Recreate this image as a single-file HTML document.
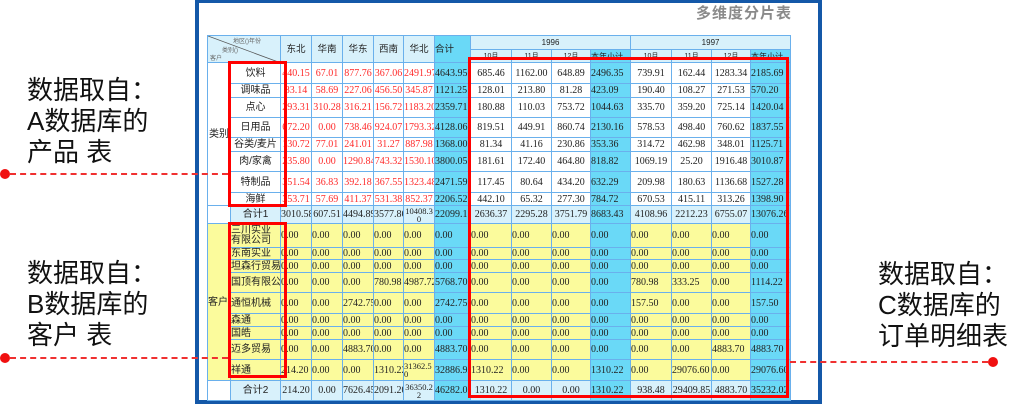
<!DOCTYPE html>
<html><head><meta charset="utf-8">
<style>
*{margin:0;padding:0;box-sizing:border-box}
body{width:1024px;height:404px;background:#fff;position:relative;overflow:hidden;font-family:"Liberation Sans","Noto Sans CJK SC",sans-serif}
.frame{position:absolute;left:195px;top:0;width:627px;height:404px;border:4px solid #1458a8;border-top-width:3px;background:#fff}
.title{position:absolute;left:696px;top:2px;font-size:15px;font-weight:bold;color:#8a8a8a;letter-spacing:1px}
table{position:absolute;left:207px;top:35px;border-collapse:collapse;table-layout:fixed;width:583px;font-family:"Liberation Serif","Noto Serif CJK SC",serif;font-size:10px;color:#222}
td{border:1px solid #6ab0ec;padding:0;overflow:hidden;white-space:nowrap;text-align:center;line-height:9px}
.h{background:#d8f1fb;font-family:"Liberation Sans","Noto Sans CJK SC",sans-serif;font-size:9.5px}
.c{background:#6ad9f7;text-align:left}
.w{background:#fff}
.r{color:#ff2a2a}
.y{background:#fbfb9c;text-align:left}
.lb{background:#d8f1fb}
.nm{font-family:"Liberation Sans","Noto Sans CJK SC",sans-serif;font-size:10px}
.wr{white-space:normal;word-break:break-all;font-size:8.5px;line-height:8px}
.box{position:absolute;border:3px solid #f00}
.ann{position:absolute;font-size:26px;line-height:31px;color:#111;font-family:"Liberation Sans","Noto Sans CJK SC",sans-serif}
.dash{position:absolute;height:0;border-top:2px dashed #f03030}
.dot{position:absolute;width:10px;height:10px;border-radius:50%;background:#f01010}
</style></head><body>
<div class="frame"></div>
<div class="title">多维度分片表</div>
<table>
<colgroup><col style="width:23px"><col style="width:50px"><col style="width:31px"><col style="width:31px"><col style="width:31px"><col style="width:30px"><col style="width:31px"><col style="width:36px"><col style="width:41px"><col style="width:40px"><col style="width:39px"><col style="width:40px"><col style="width:41px"><col style="width:40px"><col style="width:39px"><col style="width:40px"></colgroup>
<tr style="height:14px"><td colspan="2" rowspan="2" class="h" style="position:relative;font-size:6px;text-align:left"><svg width="73" height="27" style="position:absolute;left:0;top:0"><line x1="0" y1="0" x2="73" y2="27" stroke="#555" stroke-width="0.8"/></svg><div style="position:absolute;left:25px;top:2px;color:#666">地区()年份</div><div style="position:absolute;left:14px;top:11px;color:#666">类别()</div><div style="position:absolute;left:2px;top:19px;color:#666">客户</div></td><td rowspan="2" class="h">东北</td><td rowspan="2" class="h">华南</td><td rowspan="2" class="h">华东</td><td rowspan="2" class="h">西南</td><td rowspan="2" class="h">华北</td><td rowspan="2" class="h c">合计</td><td colspan="4" class="h" style="font-size:8px">1996</td><td colspan="4" class="h" style="font-size:8px">1997</td></tr>
<tr style="height:13px"><td class="h" style="font-size:7px">10月</td><td class="h" style="font-size:7px">11月</td><td class="h" style="font-size:7px">12月</td><td class="h c" style="font-size:8px">本年小计</td><td class="h" style="font-size:7px">10月</td><td class="h" style="font-size:7px">11月</td><td class="h" style="font-size:7px">12月</td><td class="h c" style="font-size:8px">本年小计</td></tr>
<tr style="height:21px"><td rowspan="8" class="w nm">类别</td><td class="w nm">饮料</td><td class="r">440.15</td><td class="r">67.01</td><td class="r">877.76</td><td class="r">367.06</td><td class="r">2491.97</td><td class="c">4643.95</td><td>685.46</td><td>1162.00</td><td>648.89</td><td class="c">2496.35</td><td>739.91</td><td>162.44</td><td>1283.34</td><td class="c">2185.69</td></tr>
<tr style="height:14px"><td class="w nm">调味品</td><td class="r">83.14</td><td class="r">58.69</td><td class="r">227.06</td><td class="r">456.50</td><td class="r">345.87</td><td class="c">1121.25</td><td>128.01</td><td>213.80</td><td>81.28</td><td class="c">423.09</td><td>190.40</td><td>108.27</td><td>271.53</td><td class="c">570.20</td></tr>
<tr style="height:20px"><td class="w nm">点心</td><td class="r">293.31</td><td class="r">310.28</td><td class="r">316.21</td><td class="r">156.72</td><td class="r">1183.20</td><td class="c">2359.71</td><td>180.88</td><td>110.03</td><td>753.72</td><td class="c">1044.63</td><td>335.70</td><td>359.20</td><td>725.14</td><td class="c">1420.04</td></tr>
<tr style="height:20px"><td class="w nm">日用品</td><td class="r">672.20</td><td class="r">0.00</td><td class="r">738.46</td><td class="r">924.07</td><td class="r">1793.32</td><td class="c">4128.06</td><td>819.51</td><td>449.91</td><td>860.74</td><td class="c">2130.16</td><td>578.53</td><td>498.40</td><td>760.62</td><td class="c">1837.55</td></tr>
<tr style="height:14px"><td class="w nm">谷类/麦片</td><td class="r">130.72</td><td class="r">77.01</td><td class="r">241.01</td><td class="r">31.27</td><td class="r">887.98</td><td class="c">1368.00</td><td>81.34</td><td>41.16</td><td>230.86</td><td class="c">353.36</td><td>314.72</td><td>462.98</td><td>348.01</td><td class="c">1125.71</td></tr>
<tr style="height:20px"><td class="w nm">肉/家禽</td><td class="r">235.80</td><td class="r">0.00</td><td class="r">1290.84</td><td class="r">743.32</td><td class="r">1530.10</td><td class="c">3800.05</td><td>181.61</td><td>172.40</td><td>464.80</td><td class="c">818.82</td><td>1069.19</td><td>25.20</td><td>1916.48</td><td class="c">3010.87</td></tr>
<tr style="height:21px"><td class="w nm">特制品</td><td class="r">351.54</td><td class="r">36.83</td><td class="r">392.18</td><td class="r">367.55</td><td class="r">1323.48</td><td class="c">2471.59</td><td>117.45</td><td>80.64</td><td>434.20</td><td class="c">632.29</td><td>209.98</td><td>180.63</td><td>1136.68</td><td class="c">1527.28</td></tr>
<tr style="height:13px"><td class="w nm">海鲜</td><td class="r">353.71</td><td class="r">57.69</td><td class="r">411.37</td><td class="r">531.38</td><td class="r">852.37</td><td class="c">2206.52</td><td>442.10</td><td>65.32</td><td>277.30</td><td class="c">784.72</td><td>670.53</td><td>415.11</td><td>313.26</td><td class="c">1398.90</td></tr>
<tr style="height:18px" class="lb"><td class="w"></td><td class="lb nm">合计1</td><td>3010.58</td><td>607.51</td><td>4494.89</td><td>3577.86</td><td class="wr">10408.30</td><td class="c">22099.13</td><td>2636.37</td><td>2295.28</td><td>3751.79</td><td class="c">8683.43</td><td>4108.96</td><td>2212.23</td><td>6755.07</td><td class="c">13076.26</td></tr>
<tr style="height:24px"><td rowspan="9" class="y nm">客户</td><td class="y nm" style="white-space:normal;word-break:break-all;line-height:10px">三川实业有限公司</td><td class="y">0.00</td><td class="y">0.00</td><td class="y">0.00</td><td class="y">0.00</td><td class="y">0.00</td><td class="c">0.00</td><td class="y">0.00</td><td class="y">0.00</td><td class="y">0.00</td><td class="c">0.00</td><td class="y">0.00</td><td class="y">0.00</td><td class="y">0.00</td><td class="c">0.00</td></tr>
<tr style="height:12px"><td class="y nm">东南实业</td><td class="y">0.00</td><td class="y">0.00</td><td class="y">0.00</td><td class="y">0.00</td><td class="y">0.00</td><td class="c">0.00</td><td class="y">0.00</td><td class="y">0.00</td><td class="y">0.00</td><td class="c">0.00</td><td class="y">0.00</td><td class="y">0.00</td><td class="y">0.00</td><td class="c">0.00</td></tr>
<tr style="height:13px"><td class="y nm">坦森行贸易</td><td class="y">0.00</td><td class="y">0.00</td><td class="y">0.00</td><td class="y">0.00</td><td class="y">0.00</td><td class="c">0.00</td><td class="y">0.00</td><td class="y">0.00</td><td class="y">0.00</td><td class="c">0.00</td><td class="y">0.00</td><td class="y">0.00</td><td class="y">0.00</td><td class="c">0.00</td></tr>
<tr style="height:20px"><td class="y nm">国顶有限公司</td><td class="y">0.00</td><td class="y">0.00</td><td class="y">0.00</td><td class="y">780.98</td><td class="y">4987.72</td><td class="c">5768.70</td><td class="y">0.00</td><td class="y">0.00</td><td class="y">0.00</td><td class="c">0.00</td><td class="y">780.98</td><td class="y">333.25</td><td class="y">0.00</td><td class="c">1114.22</td></tr>
<tr style="height:21px"><td class="y nm">通恒机械</td><td class="y">0.00</td><td class="y">0.00</td><td class="y">2742.75</td><td class="y">0.00</td><td class="y">0.00</td><td class="c">2742.75</td><td class="y">0.00</td><td class="y">0.00</td><td class="y">0.00</td><td class="c">0.00</td><td class="y">157.50</td><td class="y">0.00</td><td class="y">0.00</td><td class="c">157.50</td></tr>
<tr style="height:13px"><td class="y nm">森通</td><td class="y">0.00</td><td class="y">0.00</td><td class="y">0.00</td><td class="y">0.00</td><td class="y">0.00</td><td class="c">0.00</td><td class="y">0.00</td><td class="y">0.00</td><td class="y">0.00</td><td class="c">0.00</td><td class="y">0.00</td><td class="y">0.00</td><td class="y">0.00</td><td class="c">0.00</td></tr>
<tr style="height:13px"><td class="y nm">国皓</td><td class="y">0.00</td><td class="y">0.00</td><td class="y">0.00</td><td class="y">0.00</td><td class="y">0.00</td><td class="c">0.00</td><td class="y">0.00</td><td class="y">0.00</td><td class="y">0.00</td><td class="c">0.00</td><td class="y">0.00</td><td class="y">0.00</td><td class="y">0.00</td><td class="c">0.00</td></tr>
<tr style="height:20px"><td class="y nm">迈多贸易</td><td class="y">0.00</td><td class="y">0.00</td><td class="y">4883.70</td><td class="y">0.00</td><td class="y">0.00</td><td class="c">4883.70</td><td class="y">0.00</td><td class="y">0.00</td><td class="y">0.00</td><td class="c">0.00</td><td class="y">0.00</td><td class="y">0.00</td><td class="y">4883.70</td><td class="c">4883.70</td></tr>
<tr style="height:21px"><td class="y nm">祥通</td><td class="y">214.20</td><td class="y">0.00</td><td class="y">0.00</td><td class="y">1310.22</td><td class="y wr">31362.50</td><td class="c">32886.92</td><td class="y">1310.22</td><td class="y">0.00</td><td class="y">0.00</td><td class="c">1310.22</td><td class="y">0.00</td><td class="y">29076.60</td><td class="y">0.00</td><td class="c">29076.60</td></tr>
<tr style="height:20px" class="lb"><td class="w"></td><td class="lb nm">合计2</td><td>214.20</td><td>0.00</td><td>7626.45</td><td>2091.20</td><td class="wr">36350.22</td><td class="c">46282.07</td><td>1310.22</td><td>0.00</td><td>0.00</td><td class="c">1310.22</td><td>938.48</td><td>29409.85</td><td>4883.70</td><td class="c">35232.02</td></tr>
</table>
<div class="box" style="left:228px;top:61px;width:59px;height:146px"></div>
<div class="box" style="left:228px;top:222px;width:59px;height:156px"></div>
<div class="box" style="left:468px;top:57px;width:321px;height:341px"></div>
<div class="ann" style="left:27px;top:75px">数据取自：<br>A数据库的<br>产品 表</div>
<div class="ann" style="left:27px;top:258px">数据取自：<br>B数据库的<br>客户 表</div>
<div class="ann" style="left:878px;top:259px">数据取自：<br>C数据库的<br>订单明细表</div>
<div class="dot" style="left:0px;top:169px"></div>
<div class="dash" style="left:10px;top:173px;width:218px"></div>
<div class="dot" style="left:0px;top:353px"></div>
<div class="dash" style="left:10px;top:357px;width:218px"></div>
<div class="dot" style="left:988px;top:357px"></div>
<div class="dash" style="left:790px;top:361px;width:198px"></div>
</body></html>
